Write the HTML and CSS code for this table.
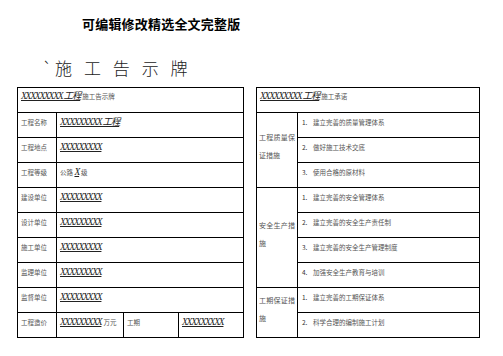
FILE: index.html
```html
<!DOCTYPE html>
<html lang="zh">
<head>
<meta charset="utf-8">
<link rel="stylesheet" href="styles.css">
</head>
<body>
<div class="page">
  <h1 class="doc-title">可编辑修改精选全文完整版</h1>
  <h2 class="sign-title"><span class="tick">`</span>施 工 告 示 牌</h2>
  <div class="tables">
    <table class="tbl tbl-left">
      <colgroup><col class="c1"><col class="c2"><col class="c3"><col class="c4"></colgroup>
      <tr><td colspan="4" class="head"><span class="xx">XXXXXXXXX 工程</span><span class="small">施工告示牌</span></td></tr>
      <tr><td class="lbl">工程名称</td><td colspan="3" class="val"><span class="xx">XXXXXXXXX 工程</span></td></tr>
      <tr><td class="lbl">工程地点</td><td colspan="3" class="val"><span class="xx">XXXXXXXXX</span></td></tr>
      <tr><td class="lbl">工程等级</td><td colspan="3" class="val"><span class="small">公路</span> <span class="xx">X</span><span class="small">级</span></td></tr>
      <tr><td class="lbl">建设单位</td><td colspan="3" class="val"><span class="xx">XXXXXXXXX</span></td></tr>
      <tr><td class="lbl">设计单位</td><td colspan="3" class="val"><span class="xx">XXXXXXXXX</span></td></tr>
      <tr><td class="lbl">施工单位</td><td colspan="3" class="val"><span class="xx">XXXXXXXXX</span></td></tr>
      <tr><td class="lbl">监理单位</td><td colspan="3" class="val"><span class="xx">XXXXXXXXX</span></td></tr>
      <tr><td class="lbl">监督单位</td><td colspan="3" class="val"><span class="xx">XXXXXXXXX</span></td></tr>
      <tr><td class="lbl">工程造价</td><td class="val"><span class="xx">XXXXXXXXX</span><span class="small">万元</span></td><td class="lbl">工期</td><td class="val"><span class="xx">XXXXXXXXX</span></td></tr>
    </table>
    <table class="tbl tbl-right">
      <colgroup><col class="r1"><col class="r2"></colgroup>
      <tr><td colspan="2" class="head"><span class="xx">XXXXXXXXX 工程</span><span class="small">施工承诺</span></td></tr>
      <tr><td rowspan="3" class="group">工程质量保证措施</td><td class="item"><span class="num">1.</span>建立完善的质量管理体系</td></tr>
      <tr><td class="item"><span class="num">2.</span>做好施工技术交底</td></tr>
      <tr><td class="item"><span class="num">3.</span>使用合格的原材料</td></tr>
      <tr><td rowspan="4" class="group">安全生产措施</td><td class="item"><span class="num">1.</span>建立完善的安全管理体系</td></tr>
      <tr><td class="item"><span class="num">2.</span>建立完善的安全生产责任制</td></tr>
      <tr><td class="item"><span class="num">3.</span>建立完善的安全生产管理制度</td></tr>
      <tr><td class="item"><span class="num">4.</span>加强安全生产教育与培训</td></tr>
      <tr><td rowspan="2" class="group">工期保证措施</td><td class="item"><span class="num">1.</span>建立完善的工期保证体系</td></tr>
      <tr><td class="item"><span class="num">2.</span>科学合理的编制施工计划</td></tr>
    </table>
  </div>
</div>
</body>
</html>
```
FILE: styles.css
```css
html, body {
  margin: 0;
  padding: 0;
  background: #fff;
}
.page {
  width: 503px;
  height: 356px;
  overflow: hidden;
  font-family: "Noto Sans CJK SC", sans-serif;
  color: #000;
}
.doc-title {
  margin: 0;
  padding: 15px 0 0 82px;
  font-size: 13px;
  line-height: 17px;
  font-weight: 700;
  letter-spacing: 0.2px;
}
.sign-title {
  margin: 0;
  padding: 25px 0 0 42px;
  font-size: 17px;
  line-height: 21px;
  font-weight: 300;
  letter-spacing: 2.8px;
  word-spacing: 2.5px;
  color: #222;
}
.tick {
  letter-spacing: 3px;
}
.tables {
  display: flex;
  gap: 12px;
  padding: 9px 0 0 17px;
}
.tbl {
  border-collapse: collapse;
  table-layout: fixed;
}
.tbl tr {
  height: 25px;
}
.tbl td {
  border: 1.5px solid #000;
  padding: 0 0 0 3px;
  vertical-align: top;
  font-size: 6.5px;
  line-height: 9px;
  color: #555;
  white-space: nowrap;
  overflow: hidden;
}
.tbl-left { width: 226px; }
.tbl-right { width: 223px; }
.c1 { width: 39px; }
.c2 { width: 67px; }
.c3 { width: 55px; }
.c4 { width: 65px; }
.r1 { width: 41px; }
.r2 { width: 182px; }
.tbl td.lbl { padding-top: 5px; }
.tbl td.val { padding-top: 3px; }
.tbl td.head { padding-top: 2px; }
.xx {
  font-family: "Liberation Serif", "Noto Sans CJK SC", serif;
  font-style: italic;
  font-size: 9.5px;
  line-height: 12px;
  letter-spacing: -1.2px;
  color: #222;
  text-decoration: underline;
  text-decoration-thickness: 1px;
  text-underline-offset: 1px;
  padding-right: 2px;
}
.small {
  font-size: 6.5px;
  color: #555;
}
.tbl td.group {
  vertical-align: middle;
  white-space: normal;
  text-align: justify;
  font-size: 7px;
  line-height: 18px;
  padding: 0 2px 8px 2px;
}
.tbl td.item {
  padding-top: 5px;
  padding-left: 4px;
}
.num {
  display: inline-block;
  width: 11px;
  color: #333;
}
```
